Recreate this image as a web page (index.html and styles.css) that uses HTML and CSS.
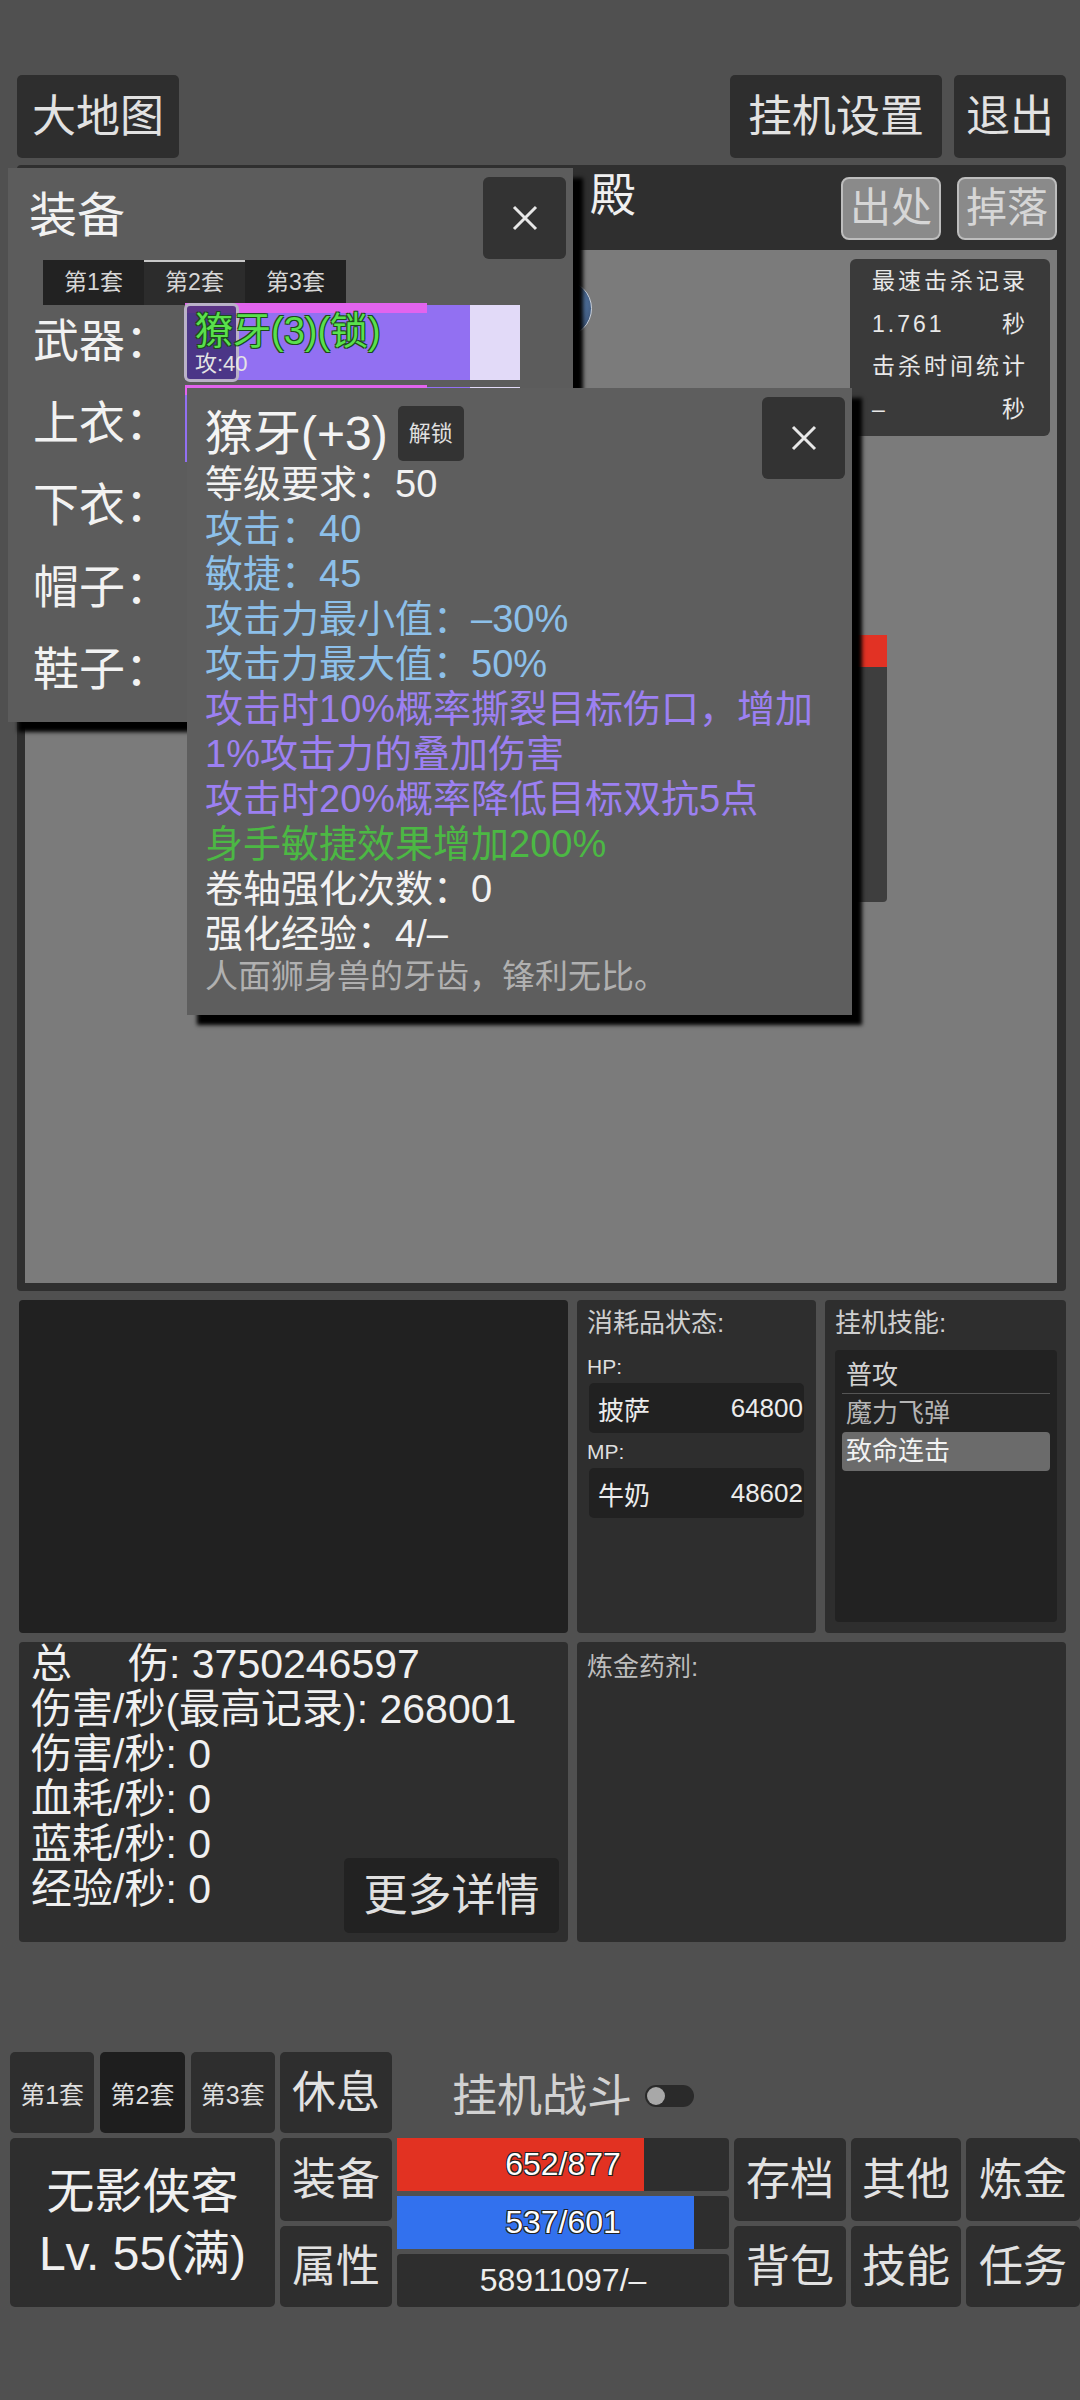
FILE: index.html
```html
<!DOCTYPE html>
<html lang="zh-CN">
<head>
    <meta charset="UTF-8">
    <title>挂机</title>
    <link rel="stylesheet" href="styles.css">
</head>
<body>
    <!-- top bar -->
    <div class="top-bar">
        <div class="btn top-btn map-btn">大地图</div>
        <div class="spacer"></div>
        <div class="btn top-btn idle-btn">挂机设置</div>
        <div class="btn top-btn exit-btn">退出</div>
    </div>

    <!-- map -->
    <div class="map-panel">
        <div class="map-header">
            <div class="map-title">殿</div>
            <div class="map-btn-grey">出处</div>
            <div class="map-btn-grey">掉落</div>
        </div>
        <div class="map-canvas">
            <div class="monster"></div>
            <div class="gauge"><div class="gauge-fill"></div></div>
            <div class="kill-record">
                <div class="kr-row">最速击杀记录</div>
                <div class="kr-row"><span>1.761</span><span>秒</span></div>
                <div class="kr-row">击杀时间统计</div>
                <div class="kr-row"><span>–</span><span>秒</span></div>
            </div>
        </div>
    </div>

    <!-- info panels -->
    <div class="panel-row row-one">
        <div class="panel panel-black"></div>
        <div class="panel">
            <div class="panel-head">消耗品状态:</div>
            <div class="cons-label first">HP:</div>
            <div class="cons-box"><span>披萨</span><span>64800</span></div>
            <div class="cons-label">MP:</div>
            <div class="cons-box"><span>牛奶</span><span>48602</span></div>
        </div>
        <div class="panel">
            <div class="panel-head">挂机技能:</div>
            <div class="skill-list">
                <div class="skill skill-a">普攻</div>
                <div class="skill skill-b">魔力飞弹</div>
                <div class="skill skill-on">致命连击</div>
            </div>
        </div>
    </div>

    <div class="panel-row row-two">
        <div class="panel stats">
            <div class="stat-line">总<span class="stat-gap"></span>伤: 3750246597</div>
            <div class="stat-line">伤害/秒(最高记录): 268001</div>
            <div class="stat-line">伤害/秒: 0</div>
            <div class="stat-line">血耗/秒: 0</div>
            <div class="stat-line">蓝耗/秒: 0</div>
            <div class="stat-line">经验/秒: 0</div>
            <div class="more-btn">更多详情</div>
        </div>
        <div class="panel">
            <div class="alch-head">炼金药剂:</div>
        </div>
    </div>

    <!-- bottom controls -->
    <div class="bottom">
        <div class="set-tabs">
            <div class="btn set-tab">第1套</div>
            <div class="btn set-tab active">第2套</div>
            <div class="btn set-tab">第3套</div>
        </div>
        <div class="btn big-btn">休息</div>
        <div class="auto-fight">
            <span>挂机战斗</span>
            <div class="toggle"><div class="knob"></div></div>
        </div>

        <div class="btn hero">
            <div>无影侠客</div>
            <div>Lv. 55(满)</div>
        </div>
        <div class="btn big-btn col-two row-b">装备</div>
        <div class="btn big-btn col-two row-c">属性</div>
        <div class="bars">
            <div class="bar"><div class="bar-fill hp" style="width: 74.4%;"></div><span class="bar-text">652/877</span></div>
            <div class="bar"><div class="bar-fill mp" style="width: 89.5%;"></div><span class="bar-text">537/601</span></div>
            <div class="bar"><span class="bar-text plain">58911097/–</span></div>
        </div>
        <div class="btn big-btn row-b">存档</div>
        <div class="btn big-btn row-b">其他</div>
        <div class="btn big-btn row-b">炼金</div>
        <div class="btn big-btn row-c">背包</div>
        <div class="btn big-btn row-c">技能</div>
        <div class="btn big-btn row-c">任务</div>
    </div>

    <!-- equipment window -->
    <div class="eq-window">
        <div class="eq-title">装备</div>
        <div class="close-btn">
            <svg width="26" height="26" viewBox="0 0 26 26"><path d="M2 2 L24 24 M24 2 L2 24" stroke="#e8e8e8" stroke-width="3" fill="none"/></svg>
        </div>
        <div class="eq-tabs">
            <div class="eq-tab">第1套</div>
            <div class="eq-tab active">第2套</div>
            <div class="eq-tab">第3套</div>
        </div>
        <div class="eq-rows">
            <div class="eq-row">
                <div class="eq-label">武器：</div>
                <div class="slot">
                    <div class="slot-bar"></div>
                    <div class="slot-strip"></div>
                    <div class="slot-icon"></div>
                    <div class="slot-name">獠牙(3)(锁)</div>
                    <div class="slot-stat">攻:40</div>
                </div>
            </div>
            <div class="eq-row">
                <div class="eq-label">上衣：</div>
                <div class="slot">
                    <div class="slot-bar"></div>
                    <div class="slot-strip"></div>
                </div>
            </div>
            <div class="eq-row"><div class="eq-label">下衣：</div></div>
            <div class="eq-row"><div class="eq-label">帽子：</div></div>
            <div class="eq-row"><div class="eq-label">鞋子：</div></div>
        </div>
    </div>

    <!-- item detail window -->
    <div class="item-window">
        <div class="close-btn">
            <svg width="26" height="26" viewBox="0 0 26 26"><path d="M2 2 L24 24 M24 2 L2 24" stroke="#e8e8e8" stroke-width="3" fill="none"/></svg>
        </div>
        <div class="item-head">
            <span class="item-name">獠牙(+3)</span>
            <span class="unlock-btn">解锁</span>
        </div>
        <div class="item-line">等级要求：50</div>
        <div class="item-line blue">攻击：40</div>
        <div class="item-line blue">敏捷：45</div>
        <div class="item-line blue">攻击力最小值：–30%</div>
        <div class="item-line blue">攻击力最大值：50%</div>
        <div class="item-line purple">攻击时10%概率撕裂目标伤口，增加1%攻击力的叠加伤害</div>
        <div class="item-line purple">攻击时20%概率降低目标双抗5点</div>
        <div class="item-line green">身手敏捷效果增加200%</div>
        <div class="item-line">卷轴强化次数：0</div>
        <div class="item-line">强化经验：4/–</div>
        <div class="item-desc">人面狮身兽的牙齿，锋利无比。</div>
    </div>
</body>
</html>
```

FILE: styles.css
```css
* {
    margin: 0;
    padding: 0;
    box-sizing: border-box;
}

body {
    width: 1080px;
    height: 2400px;
    background: #505050;
    font-family: "Liberation Sans", "Noto Sans CJK SC", sans-serif;
    color: #e6e6e6;
    position: relative;
    overflow: hidden;
}

.btn {
    background: #2e2e2e;
    border-radius: 5px;
    display: flex;
    align-items: center;
    justify-content: center;
    color: #e2e2e2;
}

/* top bar */
.top-bar {
    display: flex;
    height: 158px;
    padding: 75px 14px 0 17px;
    gap: 12px;
}

.top-bar .spacer {
    flex: 1;
}

.top-btn {
    height: 83px;
    font-size: 44px;
    line-height: 50px;
}

.map-btn { width: 162px; }
.idle-btn { width: 212px; }
.exit-btn { width: 112px; }

/* map */
.map-panel {
    margin: 7px 14px 0 17px;
    height: 1126px;
    background: #2f2f2f;
    border-radius: 4px;
    padding: 0 9px 8px 8px;
    display: flex;
    flex-direction: column;
}

.map-header {
    height: 85px;
    display: flex;
    align-items: flex-start;
    gap: 16px;
}

.map-title {
    flex: 1;
    padding-left: 565px;
    font-size: 46px;
    line-height: 60px;
    color: #f0f0f0;
}

.map-btn-grey {
    margin-top: 12px;
    width: 100px;
    height: 63px;
    background: #8a8a8a;
    border: 2px solid #bdbdbd;
    border-radius: 8px;
    color: #d6d6d6;
    font-size: 41px;
    line-height: 58px;
    text-align: center;
}

.map-canvas {
    flex: 1;
    background: #7b7b7b;
    position: relative;
}

.monster {
    position: absolute;
    left: 510px;
    top: 30px;
    width: 57px;
    height: 57px;
    border-radius: 50%;
    border: 1px solid #c8d0dc;
    background: radial-gradient(circle at 40% 40%, #9ab8dc, #4c6c96 60%, #2c3c58);
}

.gauge {
    position: absolute;
    left: 815px;
    top: 385px;
    width: 47px;
    height: 267px;
    background: #3e3e3e;
    border-radius: 0 0 4px 4px;
}

.gauge-fill {
    height: 32px;
    background: #e23224;
}

.kill-record {
    position: absolute;
    right: 7px;
    top: 9px;
    width: 200px;
    height: 177px;
    background: #3a3a3a;
    border-radius: 6px;
    padding: 1px 22px 0 22px;
    font-size: 23px;
    letter-spacing: 3px;
    color: #e8e8e8;
}

.kr-row {
    height: 42.5px;
    line-height: 42px;
    display: flex;
    justify-content: space-between;
    white-space: nowrap;
}

/* panels */
.panel-row {
    display: grid;
    padding: 0 14px 0 19px;
    column-gap: 9px;
}

.row-one {
    margin-top: 9px;
    height: 333px;
    grid-template-columns: 549px 239px 1fr;
}

.row-two {
    margin-top: 9px;
    height: 300px;
    grid-template-columns: 549px 1fr;
}

.panel {
    background: #2e2e2e;
    border-radius: 4px;
    position: relative;
}

.panel-black {
    background: #212121;
}

.panel-head {
    padding: 8px 0 0 10px;
    font-size: 26px;
    line-height: 30px;
    color: #cfcfcf;
}

.cons-label {
    margin-top: 4px;
    padding-left: 10px;
    font-size: 21px;
    line-height: 30px;
    color: #dedede;
}

.cons-label.first {
    margin-top: 14px;
}

.cons-box {
    margin: 1px 0 0 12px;
    width: 215px;
    height: 50px;
    background: #212121;
    border-radius: 5px;
    display: flex;
    justify-content: space-between;
    align-items: center;
    padding: 0 1px 0 9px;
    font-size: 26px;
    color: #ececec;
}

.skill-list {
    margin: 12px 9px 0 10px;
    height: 272px;
    background: #222;
    border-radius: 4px;
    padding: 6px 7px 0 7px;
}

.skill {
    height: 38px;
    line-height: 38px;
    padding-left: 4px;
    font-size: 26px;
}

.skill-a {
    color: #d2d2d2;
    border-bottom: 1px solid #555;
}

.skill-b {
    color: #b4b4b4;
}

.skill-on {
    height: 39px;
    background: #6b6b6b;
    border-radius: 4px;
    color: #f2f2f2;
}

.stats {
    padding-left: 12px;
}

.stat-line {
    font-size: 41px;
    line-height: 45px;
    color: #f0f0f0;
    white-space: nowrap;
}

.stat-gap {
    display: inline-block;
    width: 56px;
}

.more-btn {
    position: absolute;
    right: 9px;
    bottom: 9px;
    width: 215px;
    height: 75px;
    background: #222;
    border-radius: 5px;
    font-size: 44px;
    line-height: 75px;
    text-align: center;
    color: #e0e0e0;
}

.alch-head {
    padding: 5px 0 0 10px;
    font-size: 26px;
    line-height: 40px;
    color: #bdbdbd;
}

/* bottom */
.bottom {
    margin-top: 110px;
    padding-left: 10px;
    display: grid;
    grid-template-columns: 265px 112px 332px 112px 110px 1fr;
    grid-template-rows: 81px 83px 81px;
    gap: 5px;
}

.set-tabs {
    display: flex;
    gap: 6px;
}

.set-tab {
    flex: 1;
    font-size: 25px;
    color: #dedede;
}

.set-tab.active {
    background: #1e1e1e;
}

.big-btn {
    font-size: 44px;
    line-height: 50px;
}

.auto-fight {
    grid-column: 3 / 7;
    display: flex;
    align-items: center;
    padding-left: 55px;
    font-size: 45px;
    color: #d2d2d2;
}

.toggle {
    margin-left: 13px;
    margin-top: 6px;
    width: 49px;
    height: 22px;
    border-radius: 11px;
    background: #2a2a2a;
    padding: 2px;
}

.knob {
    width: 18px;
    height: 18px;
    border-radius: 50%;
    background: #a8a8a8;
}

.hero {
    grid-row: 2 / 4;
    flex-direction: column;
    font-size: 48px;
    line-height: 62px;
    color: #f0f0f0;
}

.col-two { grid-column: 2; }
.row-b { grid-row: 2; }
.row-c { grid-row: 3; }

.bars {
    grid-column: 3;
    grid-row: 2 / 4;
    display: flex;
    flex-direction: column;
    gap: 5px;
}

.bar {
    flex: 1;
    position: relative;
    background: #2e2e2e;
    border-radius: 4px;
    display: flex;
    align-items: center;
    justify-content: center;
}

.bar-fill {
    position: absolute;
    left: 0;
    top: 0;
    bottom: 0;
}

.bar-fill.hp { background: #e23222; }
.bar-fill.mp { background: #3271ee; }

.bar-text {
    position: relative;
    font-size: 32px;
    color: #fff;
    text-shadow: -1px -1px 0 #222, 1px -1px 0 #222, -1px 1px 0 #222, 1px 1px 0 #222;
}

.bar-text.plain {
    text-shadow: none;
    color: #eee;
}

/* windows */
.close-btn {
    position: absolute;
    top: 9px;
    right: 7px;
    width: 83px;
    height: 82px;
    background: #333;
    border-radius: 6px;
    display: flex;
    align-items: center;
    justify-content: center;
}

.eq-window {
    position: absolute;
    left: 8px;
    top: 168px;
    width: 565px;
    height: 554px;
    background: #5c5c5c;
    box-shadow: 10px 10px 4px #000;
}

.eq-title {
    padding: 18px 0 0 21px;
    font-size: 48px;
    line-height: 60px;
    color: #f2f2f2;
}

.eq-tabs {
    display: flex;
    margin: 14px 0 0 35px;
    height: 45px;
}

.eq-tab {
    width: 101px;
    background: #222;
    font-size: 23px;
    line-height: 45px;
    text-align: center;
    color: #d6d6d6;
}

.eq-tab.active {
    background: #2c2c2c;
    border-top: 2px solid #c8c8c8;
    line-height: 41px;
}

.eq-rows {
    margin-top: -5px;
}

.eq-row {
    height: 82px;
    display: flex;
    align-items: center;
}

.eq-label {
    width: 176px;
    padding-left: 25px;
    font-size: 46px;
    line-height: 56px;
    color: #f2f2f2;
    white-space: nowrap;
}

.slot {
    position: relative;
    width: 336px;
    height: 79px;
    align-self: flex-start;
    margin-top: 3px;
}

.slot-bar {
    position: absolute;
    left: 1px;
    right: 0;
    top: 2px;
    bottom: 2px;
    background: linear-gradient(to right, #9270f2 0, #9270f2 285px, #e2daf8 285px);
}

.slot-strip {
    position: absolute;
    left: 1px;
    top: 0;
    width: 242px;
    height: 10px;
    background: #e264ee;
}

.slot-icon {
    position: absolute;
    left: 0;
    top: 0;
    width: 55px;
    height: 79px;
    border: 3px solid #bab2c8;
    border-radius: 6px;
    background: rgba(58, 40, 108, 0.8);
}

.slot-name {
    position: absolute;
    left: 11px;
    top: 8px;
    font-size: 38px;
    line-height: 40px;
    color: #5ae04c;
    white-space: nowrap;
    text-shadow: -1px -1px 0 #1c4a1c, 1px -1px 0 #1c4a1c, -1px 1px 0 #1c4a1c, 1px 1px 0 #1c4a1c;
}

.slot-stat {
    position: absolute;
    left: 11px;
    top: 49px;
    font-size: 22px;
    line-height: 24px;
    color: #e4e4e4;
}

.item-window {
    position: absolute;
    left: 187px;
    top: 388px;
    width: 665px;
    height: 627px;
    background: #5e5e5e;
    box-shadow: 10px 10px 4px #000;
    padding: 17px 7px 0 18px;
}

.item-head {
    height: 57px;
    display: flex;
    align-items: center;
}

.item-name {
    font-size: 48px;
    line-height: 57px;
    color: #f4f4f4;
}

.unlock-btn {
    margin-left: 10px;
    width: 66px;
    height: 55px;
    background: #333;
    border-radius: 5px;
    font-size: 22px;
    line-height: 55px;
    text-align: center;
    color: #e0e0e0;
}

.item-line {
    font-size: 38px;
    line-height: 45px;
    color: #f2f2f2;
}

.item-line.blue { color: #8dc0ea; }
.item-line.purple { color: #9c80f2; }
.item-line.green { color: #4cb844; }

.item-desc {
    font-size: 33px;
    line-height: 40px;
    color: #b0b0b0;
}
```
